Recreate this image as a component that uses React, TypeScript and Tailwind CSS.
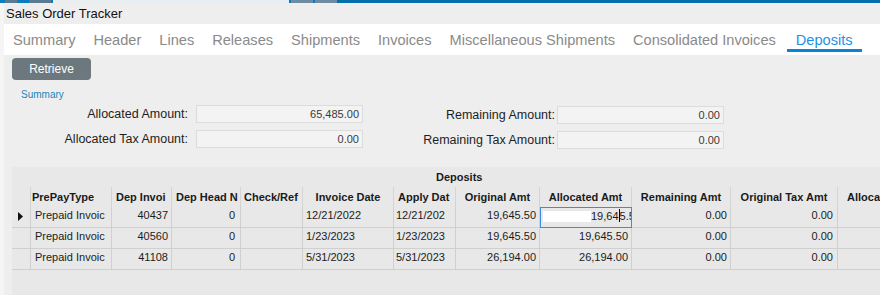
import React from "react";

const tabs = [
  "Summary",
  "Header",
  "Lines",
  "Releases",
  "Shipments",
  "Invoices",
  "Miscellaneous Shipments",
  "Consolidated Invoices",
  "Deposits",
];

type Row = {
  arrow: boolean;
  type: string;
  inv: string;
  head: string;
  check: string;
  invDate: string;
  applyDate: string;
  orig: string;
  alloc: string | null;
  remain: string;
  origTax: string;
};

const rows: Row[] = [
  {
    arrow: true,
    type: "Prepaid Invoic",
    inv: "40437",
    head: "0",
    check: "",
    invDate: "12/21/2022",
    applyDate: "12/21/202",
    orig: "19,645.50",
    alloc: null,
    remain: "0.00",
    origTax: "0.00",
  },
  {
    arrow: false,
    type: "Prepaid Invoic",
    inv: "40560",
    head: "0",
    check: "",
    invDate: "1/23/2023",
    applyDate: "1/23/2023",
    orig: "19,645.50",
    alloc: "19,645.50",
    remain: "0.00",
    origTax: "0.00",
  },
  {
    arrow: false,
    type: "Prepaid Invoic",
    inv: "41108",
    head: "0",
    check: "",
    invDate: "5/31/2023",
    applyDate: "5/31/2023",
    orig: "26,194.00",
    alloc: "26,194.00",
    remain: "0.00",
    origTax: "0.00",
  },
];

function Field({ label, value, labelW, gap }: { label: string; value: string; labelW: string; gap: string }) {
  return (
    <div className="flex items-center">
      <div className={`${labelW} text-right text-[12.5px] text-[#1e1e1e] leading-[15px]`}>{label}</div>
      <div
        className={`${gap} w-[167px] h-[18px] bg-[#f3f3f3] border border-[#dcdcdc] flex items-center justify-end pr-[3px] text-[11px] text-[#3a3a3a]`}
      >
        {value}
      </div>
    </div>
  );
}

const cell = "border-r border-b border-[#d0d0d0] h-[21px] overflow-hidden whitespace-nowrap text-[11px] leading-[13px] pt-[2px] text-[#1c1c1c]";
const hcell = "border-r border-[#d4d4d4] h-[20px] overflow-hidden whitespace-nowrap text-[11px] font-bold leading-[13px] flex items-center text-[#1a1a1a]";

export default function App() {
  return (
    <div className="w-[880px] h-[295px] overflow-hidden bg-[#eeeeee] flex flex-col font-['Liberation_Sans',Arial,sans-serif]">
      {/* top strip */}
      <div className="flex h-[3px] shrink-0">
        <div className="w-[5px] bg-[#0b7cc0]" />
        <div className="w-[12px] bg-[#5a7a90]" />
        <div className="w-[12px] bg-[#0b7cc0]" />
        <div className="w-[22px] bg-[#5a7a90]" />
        <div className="w-[2px] bg-[#0b7cc0]" />
        <div className="w-[236px] bg-[#e9eef2]" />
        <div className="w-[2px] bg-[#0b7cc0]" />
        <div className="w-[22px] bg-[#6e8ca2]" />
        <div className="w-[2px] bg-[#0b7cc0]" />
        <div className="w-[22px] bg-[#6e8ca2]" />
        <div className="flex-1 bg-[#066eac]" />
      </div>

      <div className="flex flex-1 min-h-0">
        <div className="w-[4px] bg-[#f5f5f5] shrink-0" />
        <div className="flex-1 flex flex-col min-w-0">
          {/* title */}
          <div className="h-[21px] flex items-center pl-[2px] text-[13px] text-[#111]">Sales Order Tracker</div>

          {/* tabs */}
          <div className="h-[31px] bg-white flex items-start">
            {tabs.map((t) => {
              const active = t === "Deposits";
              return (
                <div
                  key={t}
                  className={`h-[28px] px-[9px] pt-[7px] text-[14.6px] leading-[18px] border-b-[3px] ${
                    active ? "border-[#0b84d8] text-[#1e90e6] px-[8px] ml-[2px]" : "border-transparent text-[#8a8a8a]"
                  }`}
                >
                  {t}
                </div>
              );
            })}
          </div>

          {/* retrieve */}
          <div className="mt-[3px] ml-[8px] w-[79px] h-[22px] rounded-[4px] bg-[#6c787e] flex items-center justify-center text-white text-[12px]">
            Retrieve
          </div>

          <div className="mt-[9px] ml-[17px] text-[10px] leading-[12px] text-[#1b87b6]">Summary</div>

          {/* summary fields */}
          <div className="mt-[4px] flex">
            <div className="flex flex-col gap-[7px]">
              <Field label="Allocated Amount:" value="65,485.00" labelW="w-[184px]" gap="ml-[8px]" />
              <Field label="Allocated Tax Amount:" value="0.00" labelW="w-[184px]" gap="ml-[8px]" />
            </div>
            <div className="flex flex-col gap-[7px] mt-[1px]">
              <Field label="Remaining Amount:" value="0.00" labelW="w-[192px]" gap="ml-[2px]" />
              <Field label="Remaining Tax Amount:" value="0.00" labelW="w-[192px]" gap="ml-[2px]" />
            </div>
          </div>

          {/* grid */}
          <div className="mt-[18px] ml-[8px] flex-1 bg-[#e8e8e8] overflow-hidden">
            <div className="h-[20px] flex items-center pl-[424px] text-[11px] font-bold text-[#1a1a1a]">Deposits</div>
            <div className="w-max grid grid-cols-[19px_81px_60px_69px_62px_91px_62px_84px_92px_99px_107px_80px]">
              {/* header */}
              <div className={hcell} />
              <div className={`${hcell} pl-[1px]`}>PrePayType</div>
              <div className={`${hcell} pl-[4px]`}>Dep Invoi</div>
              <div className={`${hcell} pl-[4px]`}>Dep Head N</div>
              <div className={`${hcell} pl-[3px]`}>Check/Ref</div>
              <div className={`${hcell} justify-center`}>Invoice Date</div>
              <div className={`${hcell} pl-[4px]`}>Apply Dat</div>
              <div className={`${hcell} justify-center`}>Original Amt</div>
              <div className={`${hcell} justify-center`}>Allocated Amt</div>
              <div className={`${hcell} justify-center`}>Remaining Amt</div>
              <div className={`${hcell} justify-center`}>Original Tax Amt</div>
              <div className={`${hcell} pl-[9px]`}>Alloca</div>

              {rows.map((r, i) => (
                <React.Fragment key={i}>
                  <div className={`${cell} pl-[6px] !pt-[5px]`}>
                    {r.arrow && (
                      <svg width="6" height="9" viewBox="0 0 6 9">
                        <path d="M0 0 L5 4.5 L0 9 Z" fill="#111" />
                      </svg>
                    )}
                  </div>
                  <div className={`${cell} pl-[4px]`}>{r.type}</div>
                  <div className={`${cell} text-right pr-[3px]`}>{r.inv}</div>
                  <div className={`${cell} text-right pr-[5px]`}>{r.head}</div>
                  <div className={cell}>{r.check}</div>
                  <div className={`${cell} pl-[3px]`}>{r.invDate}</div>
                  <div className={`${cell} pl-[2px]`}>{r.applyDate}</div>
                  <div className={`${cell} text-right pr-[3px]`}>{r.orig}</div>
                  {r.alloc === null ? (
                    <div className="h-[21px] border border-[#3a8de0] overflow-hidden whitespace-nowrap text-[11px] leading-[13px] text-[#1c1c1c] flex items-start pl-[2px] pt-[1px]">
                      <div className="mt-[2px] w-[48px] h-[11px] bg-white shrink-0" />
                      <span className="pt-[1px]">19,64</span>
                      <span className="w-[1px] h-[13px] bg-black shrink-0" />
                      <span className="pt-[1px]">5.5</span>
                    </div>
                  ) : (
                    <div className={`${cell} text-right pr-[3px]`}>{r.alloc}</div>
                  )}
                  <div className={`${cell} text-right pr-[3px]`}>{r.remain}</div>
                  <div className={`${cell} text-right pr-[4px]`}>{r.origTax}</div>
                  <div className={cell} />
                </React.Fragment>
              ))}
            </div>
          </div>
        </div>
      </div>
    </div>
  );
}
